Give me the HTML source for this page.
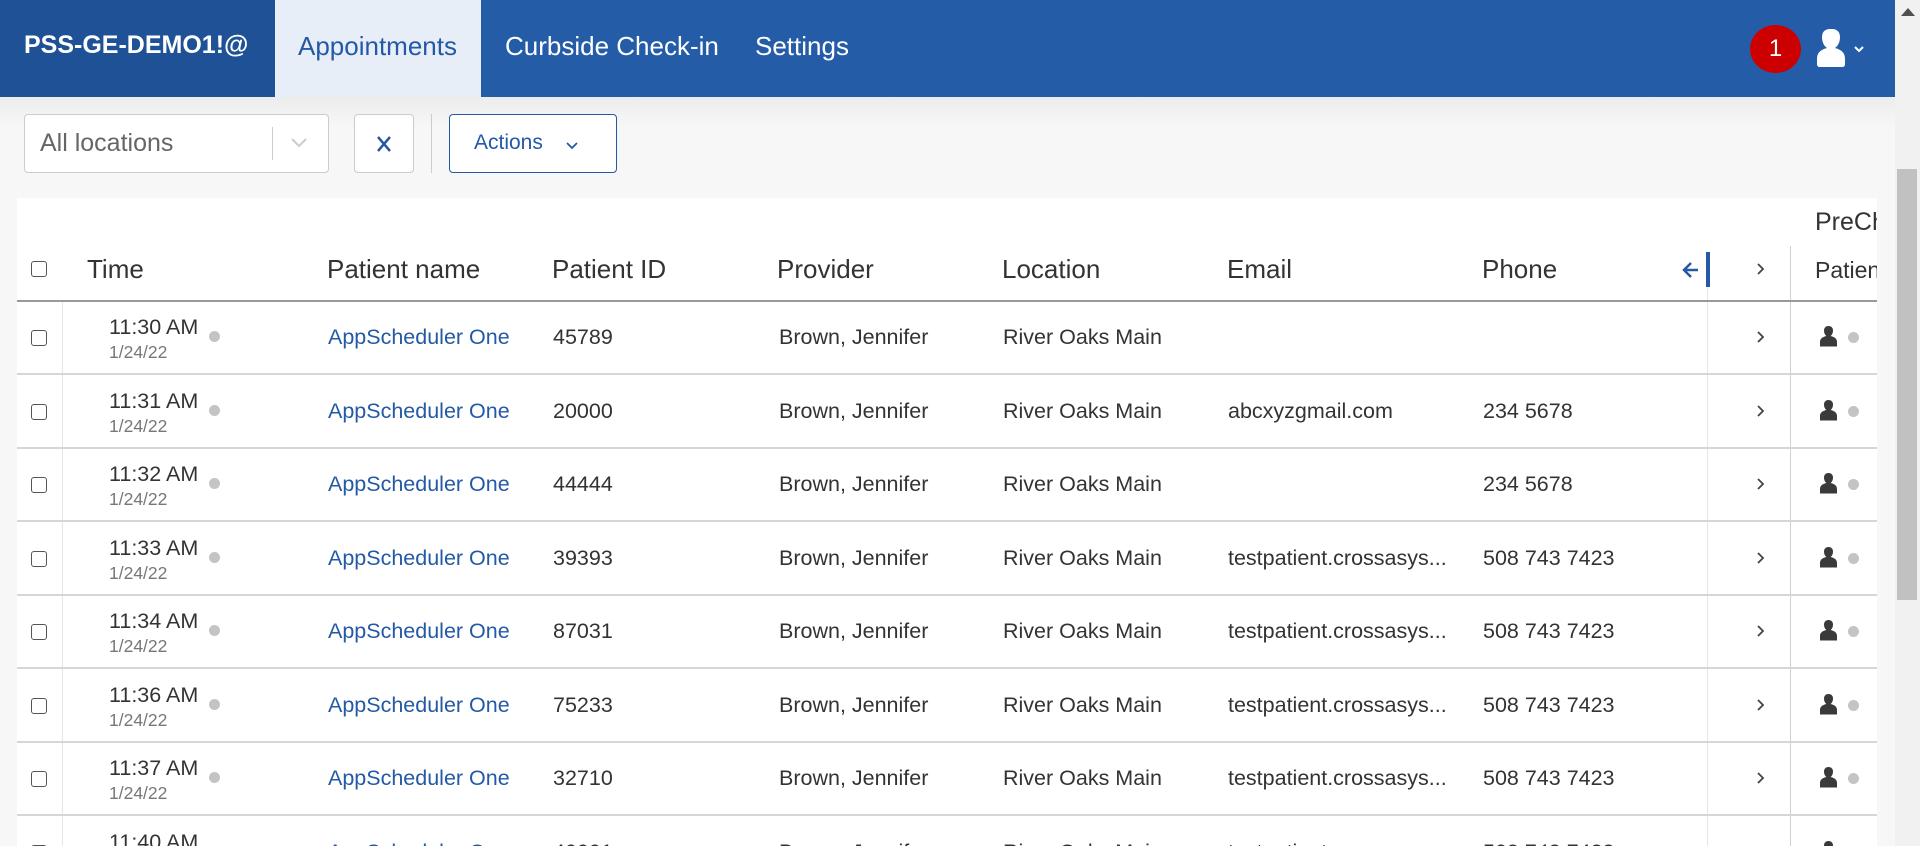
<!DOCTYPE html>
<html><head><meta charset="utf-8"><style>
*{box-sizing:border-box;margin:0;padding:0}
html,body{width:1920px;height:846px;overflow:hidden}
body{background:#f7f7f7;font-family:"Liberation Sans",sans-serif;position:relative;color:#333}
.abs{position:absolute}
.hdr{left:0;top:0;width:1895px;height:97px;background:#245ca8}
.brand{left:0;top:0;width:275px;height:97px;background:#1f5197;color:#fff;font-weight:bold;font-size:25px;padding:31px 0 0 24px}
.tab{top:0;height:97px;font-size:26px;color:#fff;padding-top:31px}
.shadow{left:0;top:97px;width:1895px;height:30px;background:linear-gradient(#ececec,#f7f7f7)}
.panel{left:17px;top:198px;width:1860px;height:648px;background:#fff}
.hrow{font-size:26px;color:#333;top:254px}
.line{height:2px;background:#d6d6d6;left:17px;width:1860px}
.cb{width:16px;height:16px;border:1.5px solid #555;border-radius:3px;left:31px;background:#fff}
.cell{font-size:21.5px;color:#333}
.link{color:#2459a6}
.dot{width:11px;height:11px;border-radius:50%;background:#c4c4c4}
.sb{left:1895px;top:0;width:25px;height:846px;background:#f1f1f1}
.thumb{left:1897px;top:169px;width:20px;height:431px;background:#c1c1c1}
#clip{position:absolute;left:0;top:0;width:1895px;height:846px;overflow:hidden}
</style></head><body>
<div class="abs hdr"></div>
<div class="abs brand">PSS-GE-DEMO1!@</div>
<div class="abs tab" style="left:275px;width:206px;background:#e8eef8;color:#2459a6;padding-left:23px">Appointments</div>
<div class="abs tab" style="left:505px">Curbside Check-in</div>
<div class="abs tab" style="left:755px">Settings</div>
<div class="abs" style="left:1750px;top:25px;width:51px;height:48px;border-radius:50%;background:#cc0000;color:#fff;font-size:24px;text-align:center;line-height:48px">1</div>
<svg class="abs" style="left:1815px;top:27px" width="52" height="44" viewBox="0 0 52 44"><path d="M15 2c-5 0-8 3-8 8 0 5 2 9 5 11-7 2-10 5-10 11v5c0 2 1 3 3 3h22c2 0 3-1 3-3v-5c0-6-3-9-10-11 3-2 5-6 5-11 0-5-3-8-8-8z" fill="#fff"/><path d="M40 20l4 4 4-4" stroke="#fff" stroke-width="2" fill="none"/></svg>
<div class="abs shadow"></div>
<div class="abs" style="left:24px;top:114px;width:305px;height:59px;border:1px solid #ccc;border-radius:4px;background:#fff"></div>
<div class="abs" style="left:40px;top:129px;font-size:25px;color:#666">All locations</div>
<div class="abs" style="left:272px;top:127px;width:1px;height:33px;background:#ccc"></div>
<svg class="abs" style="left:291px;top:137px" width="16" height="12"><path d="M1 2l7 7 7-7" stroke="#ccc" stroke-width="2" fill="none"/></svg>
<div class="abs" style="left:354px;top:114px;width:60px;height:59px;border:1px solid #ccc;border-radius:4px;background:#fff"></div>
<svg class="abs" style="left:376px;top:135px" width="16" height="18"><path d="M2 2l12 14M14 2L2 16" stroke="#2459a6" stroke-width="2.5"/></svg>
<div class="abs" style="left:431px;top:114px;width:1px;height:59px;background:#ccc"></div>
<div class="abs" style="left:449px;top:114px;width:168px;height:59px;border:1.5px solid #2459a6;border-radius:4px;background:#fff"></div>
<div class="abs" style="left:474px;top:131px;font-size:21px;color:#2459a6">Actions</div>
<svg class="abs" style="left:566px;top:141px" width="12" height="9"><path d="M1 2l5 5 5-5" stroke="#2459a6" stroke-width="1.8" fill="none"/></svg>
<div id="clip">
<div class="abs panel"></div>
<div class="abs" style="left:1815px;top:208px;font-size:25px;color:#333;width:62px;overflow:hidden;white-space:nowrap">PreCheck</div>
<div class="abs cb" style="top:261px"></div>
<div class="abs hrow" style="left:87px">Time</div>
<div class="abs hrow" style="left:327px">Patient name</div>
<div class="abs hrow" style="left:552px">Patient ID</div>
<div class="abs hrow" style="left:777px">Provider</div>
<div class="abs hrow" style="left:1002px">Location</div>
<div class="abs hrow" style="left:1227px">Email</div>
<div class="abs hrow" style="left:1482px">Phone</div>
<svg class="abs" style="left:1682px;top:260px" width="18" height="20"><path d="M16 10H3M9 3L2 10l7 7" stroke="#2459a6" stroke-width="2.5" fill="none"/></svg>
<div class="abs" style="left:1706px;top:252px;width:4px;height:35px;background:#2459a6"></div>
<div class="abs" style="left:1707px;top:287px;width:1px;height:559px;background:#e6e6e6"></div>
<div class="abs" style="left:1790px;top:246px;width:1px;height:600px;background:#d0d0d0"></div>
<div class="abs" style="left:62px;top:301px;width:1px;height:545px;background:#e6e6e6"></div>
<svg class="abs" style="left:1756px;top:262px" width="10" height="14"><path d="M2 2l5 5-5 5" stroke="#444" stroke-width="1.8" fill="none"/></svg>
<div class="abs" style="left:1815px;top:257px;font-size:23px;color:#333;width:62px;overflow:hidden;white-space:nowrap">Patient</div>
<div class="abs line" style="top:300px;background:#999"></div>
<div id="rows"></div>
</div>
<script>
var d=[["11:30 AM","45789","",""],["11:31 AM","20000","abcxyzgmail.com","234 5678"],["11:32 AM","44444","","234 5678"],["11:33 AM","39393","testpatient.crossasys...","508 743 7423"],["11:34 AM","87031","testpatient.crossasys...","508 743 7423"],["11:36 AM","75233","testpatient.crossasys...","508 743 7423"],["11:37 AM","32710","testpatient.crossasys...","508 743 7423"],["11:40 AM","40001","testpatient.crossasys...","508 743 7423"]];
var h="";
d.forEach(function(r,i){var t=301+i*73.5;
h+='<div class="abs cb" style="top:'+(t+29)+'px"></div>';
h+='<div class="abs cell" style="left:109px;top:'+(t+14)+'px">'+r[0]+'</div>';
h+='<div class="abs cell" style="left:109px;top:'+(t+41)+'px;font-size:17.5px;color:#777">1/24/22</div>';
h+='<div class="abs dot" style="left:209px;top:'+(t+30)+'px"></div>';
h+='<div class="abs cell link" style="left:328px;top:'+(t+24)+'px">AppScheduler One</div>';
h+='<div class="abs cell" style="left:553px;top:'+(t+24)+'px">'+r[1]+'</div>';
h+='<div class="abs cell" style="left:779px;top:'+(t+24)+'px">Brown, Jennifer</div>';
h+='<div class="abs cell" style="left:1003px;top:'+(t+24)+'px">River Oaks Main</div>';
h+='<div class="abs cell" style="left:1228px;top:'+(t+24)+'px">'+r[2]+'</div>';
h+='<div class="abs cell" style="left:1483px;top:'+(t+24)+'px">'+r[3]+'</div>';
h+='<svg class="abs" style="left:1756px;top:'+(t+29)+'px" width="10" height="14"><path d="M2 2l5 5-5 5" stroke="#444" stroke-width="1.8" fill="none"/></svg>';
h+='<svg class="abs" style="left:1820px;top:'+(t+25)+'px" width="17" height="21" viewBox="0 0 17 21"><path d="M8.5 0C5.5 0 4 2 4 4.5 4 7 5 9 6.5 10 2 11 0 13 0 16v4.5h17V16c0-3-2-5-6.5-6C12 9 13 7 13 4.5 13 2 11.5 0 8.5 0z" fill="#3a3a3a"/></svg>';
h+='<div class="abs dot" style="left:1848px;top:'+(t+31)+'px"></div>';
h+='<div class="abs line" style="top:'+(t+72)+'px"></div>';
});
document.getElementById("rows").outerHTML=h;
</script>
<div class="abs sb"></div>
<div class="abs thumb"></div>
<svg class="abs" style="left:1901px;top:8px" width="14" height="8"><path d="M0 8L7 0l7 8z" fill="#505050"/></svg>
</body></html>
